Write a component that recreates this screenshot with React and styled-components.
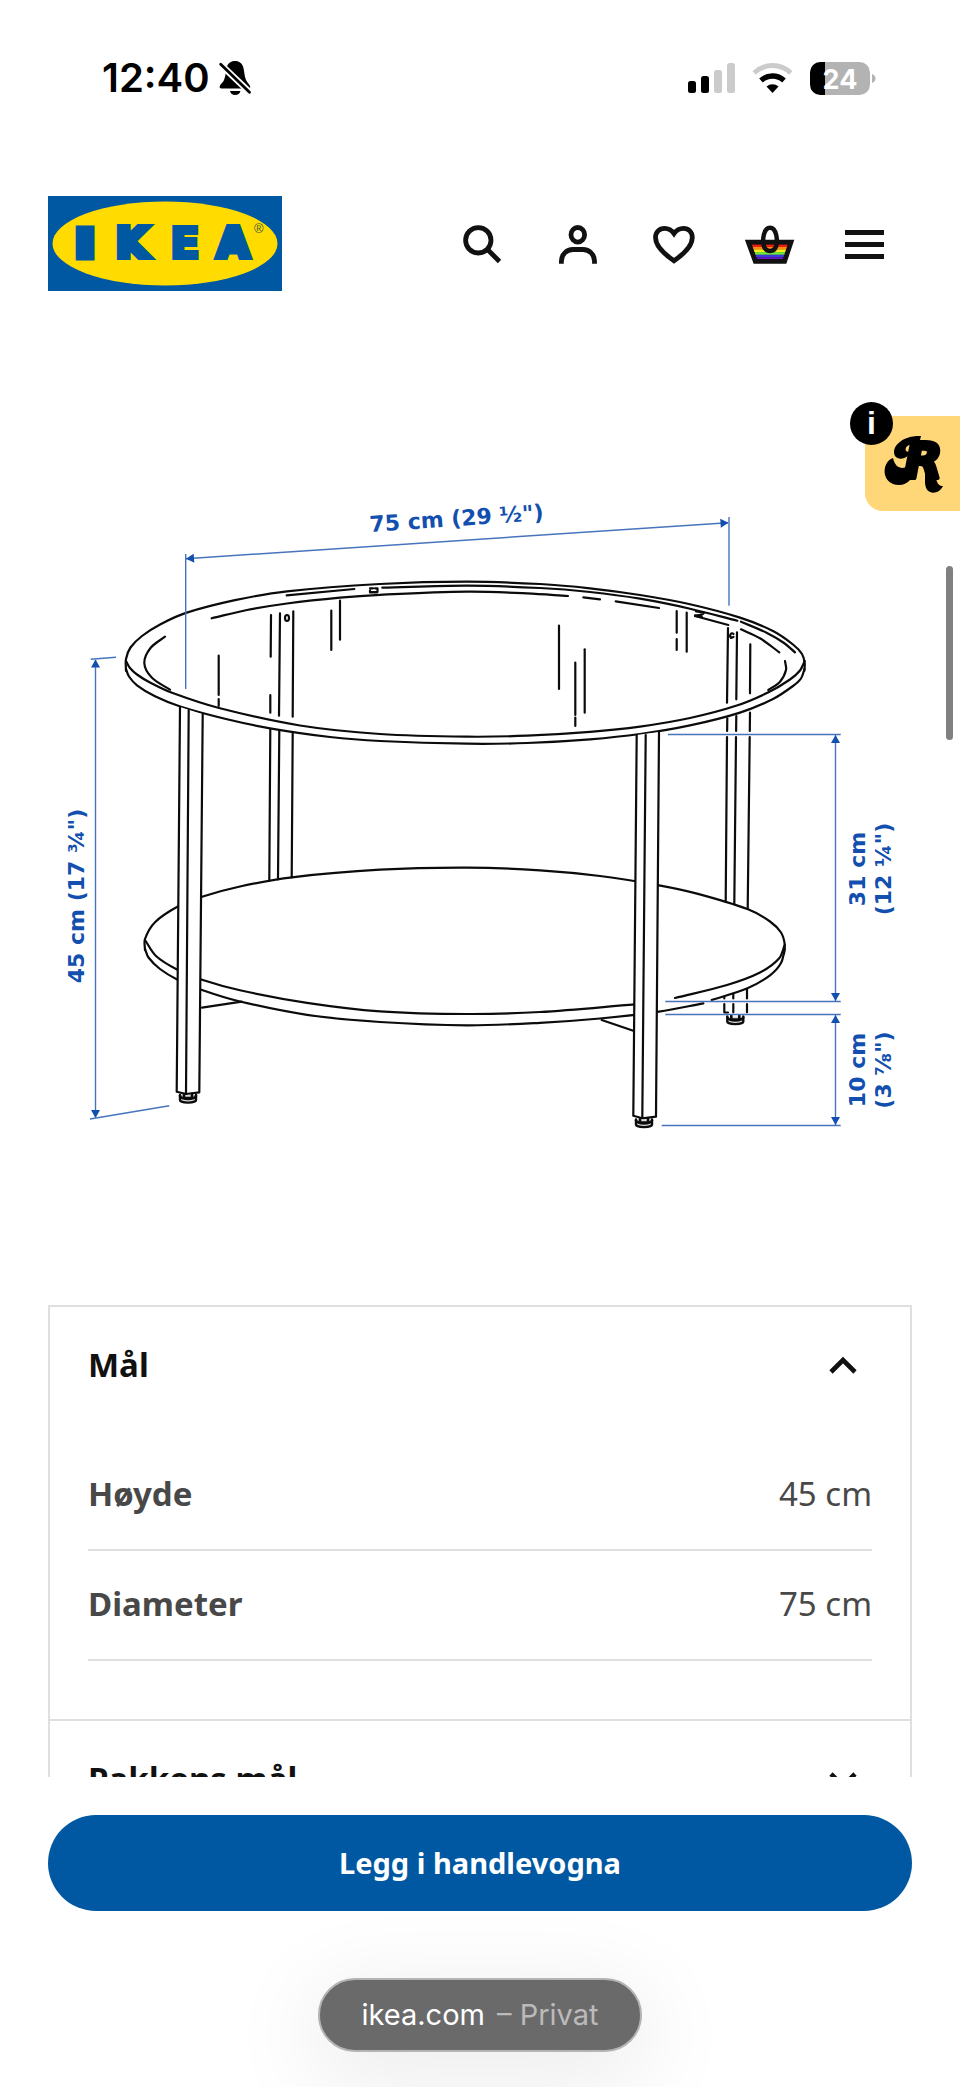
import React, { useState } from "react";
import styled, { createGlobalStyle } from "styled-components";

const GlobalStyle = createGlobalStyle`
  *, *::before, *::after { box-sizing: border-box; }
  body { margin: 0; background: #fff; color: #111; font-family: "Noto Sans", sans-serif; }
  button { font: inherit; color: inherit; border: 0; background: none; padding: 0; cursor: pointer; }
  svg { display: block; }
`;

const Page = styled.div`
  position: relative;
  min-height: 100vh;
  padding-bottom: 240px;
`;

const StatusBar = styled.div`
  display: flex;
  align-items: center;
  justify-content: space-between;
  height: 156px;
  padding: 0 84px 0 102px;
  color: #000;
  font-family: Inter, sans-serif;
`;

const Clock = styled.div`
  display: flex;
  align-items: center;
  gap: 8px;
  font-size: 40px;
  font-weight: 600;
  line-height: 48px;
`;

const StatusIcons = styled.div`
  display: flex;
  align-items: center;
  gap: 17px;
`;

const Header = styled.header`
  display: flex;
  align-items: center;
  justify-content: space-between;
  padding: 40px 70px 0 48px;
`;

const LogoLink = styled.a`
  display: block;
  width: 234px;
`;

const Nav = styled.nav`
  display: flex;
  gap: 48px;
`;

const IconButton = styled.button`
  width: 48px;
  height: 48px;

  svg { overflow: visible; }
`;

const Main = styled.main`
  padding: 209px 48px 0;
`;

const Drawing = styled.svg`
  width: 100%;
  height: auto;
  margin-bottom: 165px;
  overflow: visible;
`;

const Accordion = styled.section`
  border: 2px solid #dfdfdf;
`;

const Panel = styled.div`
  & + & { border-top: 2px solid #dfdfdf; }
`;

const PanelTitle = styled.h2`
  margin: 0;
  font-size: 33px;
  line-height: 48px;
`;

const PanelToggle = styled.button`
  display: flex;
  align-items: center;
  justify-content: space-between;
  width: 100%;
  height: 116px;
  padding: 0 52px 0 38px;
  font-weight: 700;
  text-align: left;
`;

const Measurements = styled.dl`
  margin: 0;
  padding: 18px 38px 58px;
`;

const MeasureRow = styled.div`
  display: flex;
  align-items: center;
  justify-content: space-between;
  height: 110px;
  padding-bottom: 2px;
  border-bottom: 2px solid #dfdfdf;
  color: #484848;
  font-size: 33px;
  line-height: 48px;

  dt { font-weight: 700; }
  dd { margin: 0; }
`;

const BottomBar = styled.div`
  position: fixed;
  right: 0;
  bottom: 0;
  left: 0;
  display: flex;
  flex-direction: column;
  align-items: center;
  gap: 67px;
  padding: 38px 48px 35px;
  overflow: hidden;
  background: #fff;
`;

const BuyButton = styled.button`
  width: 100%;
  height: 96px;
  border-radius: 48px;
  background: #0058a3;
  color: #fff;
  font-size: 29px;
  font-weight: 700;
  line-height: 40px;
`;

const AddressPill = styled.button`
  display: flex;
  align-items: center;
  justify-content: center;
  gap: 12px;
  height: 74px;
  padding: 0 42px;
  border: 2px solid #b4b4b4;
  border-radius: 37px;
  background: #6a6a6a;
  box-shadow: 0 20px 90px 10px rgba(0, 0, 0, 0.08);
  color: #fff;
  font-family: Inter, sans-serif;
  font-size: 29px;
  line-height: 40px;
`;

const PrivateNote = styled.span`
  color: #bbb;
`;

const RewardTab = styled.button`
  position: absolute;
  top: 416px;
  right: 0;
  width: 95px;
  height: 95px;
  border-radius: 18px 0 0 18px;
  background: #ffd778;
`;

const InfoBadge = styled.span`
  position: absolute;
  top: -14px;
  left: -15px;
  width: 43px;
  height: 43px;
  border-radius: 50%;
  background: #000;
  color: #fff;
  font-family: "Liberation Sans", sans-serif;
  font-size: 32px;
  font-weight: 700;
  line-height: 43px;
  text-align: center;
`;

const ScrollThumb = styled.div`
  position: absolute;
  top: 566px;
  right: 7px;
  width: 7px;
  height: 174px;
  border-radius: 4px;
  background: #808080;
`;

/* Smooth curve through a list of points (Catmull-Rom to Bezier). */
function curve(pts) {
  let d = `M${pts[0][0]} ${pts[0][1]}`;
  for (let i = 0; i < pts.length - 1; i++) {
    const a = pts[i - 1] || pts[i];
    const b = pts[i];
    const c = pts[i + 1];
    const e = pts[i + 2] || c;
    const len = (p, q) => Math.hypot(p[0] - q[0], p[1] - q[1]);
    const s = len(b, c);
    const k1 = s / ((len(a, b) + s) * 3 || 1);
    const k2 = s / ((len(c, e) + s) * 3 || 1);
    d += ` C${b[0] + (c[0] - a[0]) * k1} ${b[1] + (c[1] - a[1]) * k1} ${c[0] - (e[0] - b[0]) * k2} ${c[1] - (e[1] - b[1]) * k2} ${c[0]} ${c[1]}`;
  }
  return d;
}

const tableTop = [
  [[126, 671], [126, 659], [130.5, 647.5], [142, 636], [161, 624], [186, 612.9], [235, 600.2], [287, 591.3], [380, 584], [467, 581.7], [540, 584], [590, 588.3], [640, 595], [690, 604.2], [740, 617.6], [773, 631], [793, 644.5], [802, 654], [804.7, 663], [804.3, 671]],
  [[126, 661], [130, 668], [137, 674.5], [150, 682.5], [172, 692.8], [220, 708.3], [300, 725.5], [380, 734], [467, 736.7], [527, 735.7], [590, 731.9], [640, 726.6], [690, 718], [736, 705.8], [768, 692.5], [790, 679.5], [800, 670.5], [804.7, 661]],
  [[126, 669], [129, 676.5], [137, 685.3], [155, 696.3], [181, 706.8], [227, 719.3], [270, 728.3], [330, 737], [380, 741], [467, 743.7], [527, 743], [590, 739.3], [640, 734], [690, 725.4], [740, 712.6], [773, 699], [793, 686], [801, 678.5], [804.5, 669]],
  [[211.7, 618.3], [247, 610], [287, 603.5], [340, 597.6], [380, 594.8], [467, 591.7], [527, 593.3], [568, 596]],
  [[382.3, 587.7], [467, 585.7], [540, 588], [590, 592], [640, 598.7], [690, 608.7], [737.3, 620.7]],
  [[741, 621.7], [767, 633], [784, 643], [795, 652.3]],
  [[741, 629.3], [760, 638.3], [779.3, 652.3]],
  [[785, 661], [786, 670], [780, 681.7], [768.3, 690]],
  [[165, 636.7], [150.5, 648], [144.3, 663], [151.7, 677.5], [170, 689.7]],
];

const shelf = [
  [[145, 950], [145, 939], [155, 922.2], [178.3, 906.3], [202, 896.7], [240, 886.5], [292, 877.3], [380, 869.7], [467, 867.7], [540, 870.3], [600, 876], [659, 885.3], [697, 893.6], [748, 909.3], [770, 921.5], [781, 932.5], [784.7, 944], [784, 954]],
  [[784.7, 945], [779, 958.5], [760, 972.5], [727, 985], [675, 998]],
  [[635, 1004.3], [540, 1012], [467, 1014], [380, 1011.3], [307, 1002.8], [240, 990.3], [202, 979.8], [177, 969.5], [156, 956], [145, 940]],
  [[145, 949], [148.5, 957.5], [160, 969], [178, 980], [202, 990], [240, 1001.5], [307, 1014.8], [380, 1022], [467, 1025.3], [540, 1022.8], [600, 1018.5], [659, 1011.7], [703.3, 1003.3]],
  [[711.7, 1000], [748, 988], [770, 975.3], [781, 963], [784.7, 949]],
];

const strokes = [
  [286.7, 595.3, 354.3, 589], [583.3, 597.3, 600, 599.3], [615.7, 601.3, 659, 608], [695, 616, 728.3, 625],
  [218.7, 655.7, 218.7, 695], [218.7, 699, 218.7, 706], [271, 615, 270.7, 656.7], [270.3, 695, 270.3, 712.7],
  [280, 613.3, 279, 715.7], [293.3, 611.3, 292.7, 716.7], [331.3, 610.7, 331.3, 650], [340, 600.7, 340, 639.7],
  [559, 625.7, 559, 689], [575.3, 662.7, 575.3, 715], [575.3, 717.5, 575.3, 726], [584.7, 649.3, 584.7, 712.7],
  [676.7, 611, 676.7, 632.7], [676.7, 639, 676.7, 650], [686.7, 612.7, 686.7, 651.7],
  [728, 628, 727, 702.7], [737, 632.3, 736.3, 699.3], [750.3, 644.3, 750, 693.3],
  [270.3, 729, 269.3, 880.7], [279.3, 730, 278, 879.3], [292.7, 732.3, 291.7, 877.3],
  [727.3, 718.3, 727.1, 731], [736.3, 716, 736.1, 731], [750, 712.7, 749.8, 731],
  [727, 737, 725.7, 901.7], [736, 737, 734.3, 904.3], [749.7, 737, 747.7, 909],
  [724.3, 997, 724.3, 998.5], [724.3, 1004, 724.3, 1012.3], [733.3, 994, 733.3, 998.5], [733.3, 1004, 733.3, 1012.3],
  [747, 989, 747, 998.5], [747, 1004, 747, 1012.3], [725, 1012.5, 728, 1012.5],
  [202, 1007.7, 241.7, 1001.7], [601.7, 1020, 633.3, 1030.7],
];

const dimensionLines = [
  [185.7, 554, 185.7, 689], [729, 517, 729, 605.7], [186, 558.7, 728, 522.7],
  [95.5, 660, 95.5, 1117], [90.7, 659.3, 116, 657.3], [90, 1119, 169.3, 1105.7],
  [668, 734.5, 840.7, 734.5], [665.3, 1001.5, 840.7, 1001.5], [665.3, 1014.5, 840.7, 1014.5],
  [661.7, 1125.5, 840.7, 1125.5], [835.5, 735, 835.5, 1001], [835.5, 1015, 835.5, 1125],
];

const arrows = [
  [186, 558.7, 176], [728.5, 522.7, -4], [95.5, 659.5, -90], [95.5, 1118, 90],
  [835.5, 735, -90], [835.5, 1001, 90], [835.5, 1015, -90], [835.5, 1125, 90],
];

const Line = ({ p }) => <line x1={p[0]} y1={p[1]} x2={p[2]} y2={p[3]} />;

const Foot = ({ x, y }) => (
  <g transform={`translate(${x} ${y})`}>
    <path d="M-8 -3 V2 C-8 5.5 8 5.5 8 2 V-3" fill="#ddd" strokeWidth="2.4" />
    <path d="M-8 -2 C-6 2 6 2 8 -2 M-4 -4 V0 H4 V-4" strokeWidth="2.6" />
  </g>
);

function TableDrawing() {
  return (
    <Drawing viewBox="48 500 864 640" role="img" aria-label="Bord med mål">
      <g fill="none" stroke="#0b0b0b" strokeWidth="2.2" strokeLinecap="round" strokeLinejoin="round">
        {tableTop.map((p, i) => <path key={i} d={curve(p)} />)}
        {shelf.map((p, i) => <path key={i} d={curve(p)} />)}
        {strokes.map((p, i) => <Line key={i} p={p} />)}
        <ellipse cx="287" cy="618" rx="2" ry="3" />
        <path d="M733.5 634 C731 631.5 729 636 731 638 L733.5 637" />
        <path d="M370 588.3 H373 M375 588.3 H377.5 V592 H370 V590.5 M370 592.4 H377" />
        <path d="M696 611.5 L704 612.5 C703 615 699 615.5 695 615.3 M695 616 L702 617" />
        <path d="M180 707 L176.7 1091.7 L186 1094 L199.3 1092.3 L202.7 714.3" fill="#fff" />
        <path d="M188.7 710 L186 1094" />
        <path d="M636.7 735 L633.3 1115.7 L642.3 1118.3 L656 1116.7 L659 732" fill="#fff" />
        <path d="M645.7 735 L642.3 1118" />
        <Foot x={188} y={1098} />
        <Foot x={644} y={1122.5} />
        <Foot x={735.3} y={1019.5} />
      </g>
      <g fill="none" stroke="#4674bd" strokeWidth="1.4">
        {dimensionLines.map((p, i) => <Line key={i} p={p} />)}
      </g>
      <g fill="#124fae">
        {arrows.map(([x, y, a], i) => (
          <path key={i} d="M0 0 L-8 -4.5 V4.5 Z" transform={`translate(${x} ${y}) rotate(${a})`} />
        ))}
      </g>
      <g fill="#124fae" fontFamily='"DejaVu Sans", Verdana, sans-serif' fontWeight="700" fontSize="22" textAnchor="middle">
        <text transform="translate(457 526) rotate(-4)">75 cm (29 ½")</text>
        <text transform="translate(84 896) rotate(-90)">45 cm (17 ¾")</text>
        <text transform="translate(865 869) rotate(-90)">31 cm</text>
        <text transform="translate(891 869) rotate(-90)">(12 ¼")</text>
        <text transform="translate(865 1070) rotate(-90)">10 cm</text>
        <text transform="translate(891 1070) rotate(-90)">(3 ⅞")</text>
      </g>
    </Drawing>
  );
}

const Logo = () => (
  <svg viewBox="0 0 234 95" width="100%" role="img" aria-label="IKEA">
    <rect width="234" height="95" fill="#0058a3" />
    <ellipse cx="117" cy="47.5" rx="112.5" ry="42" fill="#ffdb00" />
    <g fill="#0058a3" stroke="#0058a3" strokeWidth="6" strokeLinejoin="miter" fontFamily='"DejaVu Sans", sans-serif' fontWeight="700" fontSize="41" textAnchor="middle">
      <text x="37" y="58" fontSize="31" strokeWidth="13">I</text>
      <text x="84" y="61">K</text>
      <text x="137" y="62" fontSize="43" strokeWidth="4">E</text>
      <text x="185" y="61">A</text>
    </g>
    <text x="206" y="37" fontFamily='"Liberation Sans", sans-serif' fontSize="13" fill="#3b5c42">®</text>
  </svg>
);

const BellOff = () => (
  <svg width="34" height="36" viewBox="0 0 34 36" aria-hidden="true">
    <path d="M17 1 C12.5 1 10 3.5 8.8 7 C7.5 11 8 16 6 20 C5 22.5 1.7 24.5 1.7 27 C1.7 28 2.4 28.4 3.2 28.4 H30.8 C31.8 28.4 32.4 27.6 32.2 26.6 C31.8 24.5 29 22.5 28 20 C26.2 16 26.5 11 25.2 7 C24 3.5 21.5 1 17 1 Z M12 31 H22.4 C22 33.5 19.8 35 17.2 35 C14.6 35 12.5 33.5 12 31 Z" fill="#000" />
    <path d="M0 2 L33 33.5" stroke="#fff" strokeWidth="6.5" />
    <path d="M2.7 4.2 L31.5 32.2" stroke="#000" strokeWidth="2.8" strokeLinecap="round" />
  </svg>
);

const Signal = () => (
  <svg width="47" height="30" viewBox="0 0 47 30" aria-hidden="true">
    <rect x="0" y="18" width="8" height="12" rx="2.5" fill="#000" />
    <rect x="13" y="13" width="8" height="17" rx="2.5" fill="#000" />
    <rect x="26" y="7" width="8" height="23" rx="2.5" fill="#cbcbcb" />
    <rect x="39" y="0" width="8" height="30" rx="2.5" fill="#cbcbcb" />
  </svg>
);

const Wifi = () => (
  <svg width="41" height="30" viewBox="0 0 41 30" fill="none" aria-hidden="true">
    <path d="M2.3 10 A26 26 0 0 1 38.7 10" stroke="#cbcbcb" strokeWidth="5" />
    <path d="M9 17.5 A17 17 0 0 1 32 17.5" stroke="#000" strokeWidth="5.4" />
    <path d="M14.5 23.5 A9 9 0 0 1 26.5 23.5 L20.5 30 Z" fill="#000" />
  </svg>
);

const Battery = () => (
  <svg width="66" height="33" viewBox="0 0 66 33" role="img" aria-label="24 %">
    <rect width="60" height="33" rx="10.5" fill="#b3b3b3" />
    <path d="M15 0 H10.5 A10.5 10.5 0 0 0 0 10.5 V22.5 A10.5 10.5 0 0 0 10.5 33 H15 Z" fill="#000" />
    <path d="M62 12 C64.3 13 65.5 14.5 65.5 16.5 S64.3 20 62 21 Z" fill="#b3b3b3" />
    <text x="30" y="26.5" fill="#fff" fontFamily="Inter, sans-serif" fontWeight="700" fontSize="27" textAnchor="middle">24</text>
  </svg>
);

const Glyph = ({ children }) => (
  <svg width="48" height="48" viewBox="0 0 48 48" fill="none" stroke="#111" strokeWidth="4.8" aria-hidden="true">
    {children}
  </svg>
);

const Basket = () => (
  <Glyph>
    <path d="M1 21 H46 L39 42 H9 Z" fill="#111" stroke="none" />
    {["#e8200c", "#ff8a12", "#f4ee14", "#6fe83a", "#3a39d8", "#6a12c8"].map((c, i) => (
      <path key={c} d={`M${5.6 + i * 1.1} ${25.7 + i * 2.6} H${42.4 - i * 1.1}`} stroke={c} strokeWidth="2.8" />
    ))}
    <path d="M2.3 22.2 H45 L38.6 41.3 H9.3 Z" />
    <path d="M24 7.7 C20.5 7.7 18.8 10.5 17.8 15 C16 23 17.5 31 24 31 S32 23 30.2 15 C29.2 10.5 27.5 7.7 24 7.7 Z" strokeWidth="4.4" />
  </Glyph>
);

const navItems = [
  ["Søk", <Glyph><circle cx="20.3" cy="20.3" r="12.7" /><path d="M29.3 29.3 L41.5 41.5" /></Glyph>],
  ["Logg inn", <Glyph><ellipse cx="23.8" cy="14.8" rx="6.8" ry="7.3" /><path d="M7.4 43.7 V41 A11.5 11.5 0 0 1 18.9 29.5 H29 A11.5 11.5 0 0 1 40.5 41 V43.7" /></Glyph>],
  ["Favoritter", <Glyph><path d="M24 40.8 C17 36 5.5 27 5.5 17.5 C5.5 12 9.5 8.3 14.5 8.3 C18.5 8.3 21.5 10 24 13.5 C26.5 10 29.5 8.3 33.5 8.3 C38.5 8.3 42.3 12 42.3 17.5 C42.3 27 31 36 24 40.8 Z" /></Glyph>],
  ["Handlevogn", <Basket />],
  ["Meny", <Glyph><path d="M3 12.5 H42 M3 24.5 H42 M3 36.5 H42" /></Glyph>],
];

const Chevron = ({ open }) => (
  <svg width="30" height="30" viewBox="0 0 30 30" fill="none" stroke="#111" strokeWidth="4.6" aria-hidden="true">
    <path d={open ? "M3 22 L15 10 L27 22" : "M3 10 L15 22 L27 10"} />
  </svg>
);

const RewardMark = () => (
  <svg width="95" height="95" viewBox="0 0 95 95" aria-hidden="true">
    <text x="39" y="62" fontFamily='"DejaVu Sans", sans-serif' fontStyle="italic" fontWeight="700" fontSize="50" stroke="#000" strokeWidth="4" strokeLinejoin="round">R</text>
    <path d="M28 42 C16 46 16 69 34 69 C43 69 48 62 52 52 L46 46 C43 53 31 56 28 42 Z" />
    <path d="M56 20 C40 19 29 28 29 36 C29 46 44 44 45 35 C41 38 38 32 44 29 L54 28 Z" />
    <path d="M60 58 L70 55 C71 68 74 70 78 70 C74 79 60 80 60 66 Z" />
  </svg>
);

const measurements = [["Høyde", "45 cm"], ["Diameter", "75 cm"]];

function AccordionPanel({ id, title, initiallyOpen, children }) {
  const [open, setOpen] = useState(Boolean(initiallyOpen));
  return (
    <Panel>
      <PanelTitle>
        <PanelToggle type="button" aria-expanded={open} aria-controls={id} onClick={() => setOpen(!open)}>
          {title}
          <Chevron open={open} />
        </PanelToggle>
      </PanelTitle>
      <div id={id} hidden={!open}>{children}</div>
    </Panel>
  );
}

export default function App() {
  return (
    <>
      <GlobalStyle />
      <Page>
        <StatusBar>
          <Clock>12:40<BellOff /></Clock>
          <StatusIcons><Signal /><Wifi /><Battery /></StatusIcons>
        </StatusBar>
        <Header>
          <LogoLink href="#"><Logo /></LogoLink>
          <Nav>
            {navItems.map(([label, icon]) => (
              <IconButton key={label} type="button" aria-label={label}>{icon}</IconButton>
            ))}
          </Nav>
        </Header>
        <Main>
          <TableDrawing />
          <Accordion>
            <AccordionPanel id="size" title="Mål" initiallyOpen>
              <Measurements>
                {measurements.map(([name, value]) => (
                  <MeasureRow key={name}><dt>{name}</dt><dd>{value}</dd></MeasureRow>
                ))}
              </Measurements>
            </AccordionPanel>
            <AccordionPanel id="package" title="Pakkens mål" />
          </Accordion>
        </Main>
        <RewardTab type="button" aria-label="Fordeler">
          <RewardMark />
          <InfoBadge>i</InfoBadge>
        </RewardTab>
        <ScrollThumb />
      </Page>
      <BottomBar>
        <BuyButton type="button">Legg i handlevogna</BuyButton>
        <AddressPill type="button">ikea.com<PrivateNote>– Privat</PrivateNote></AddressPill>
      </BottomBar>
    </>
  );
}
